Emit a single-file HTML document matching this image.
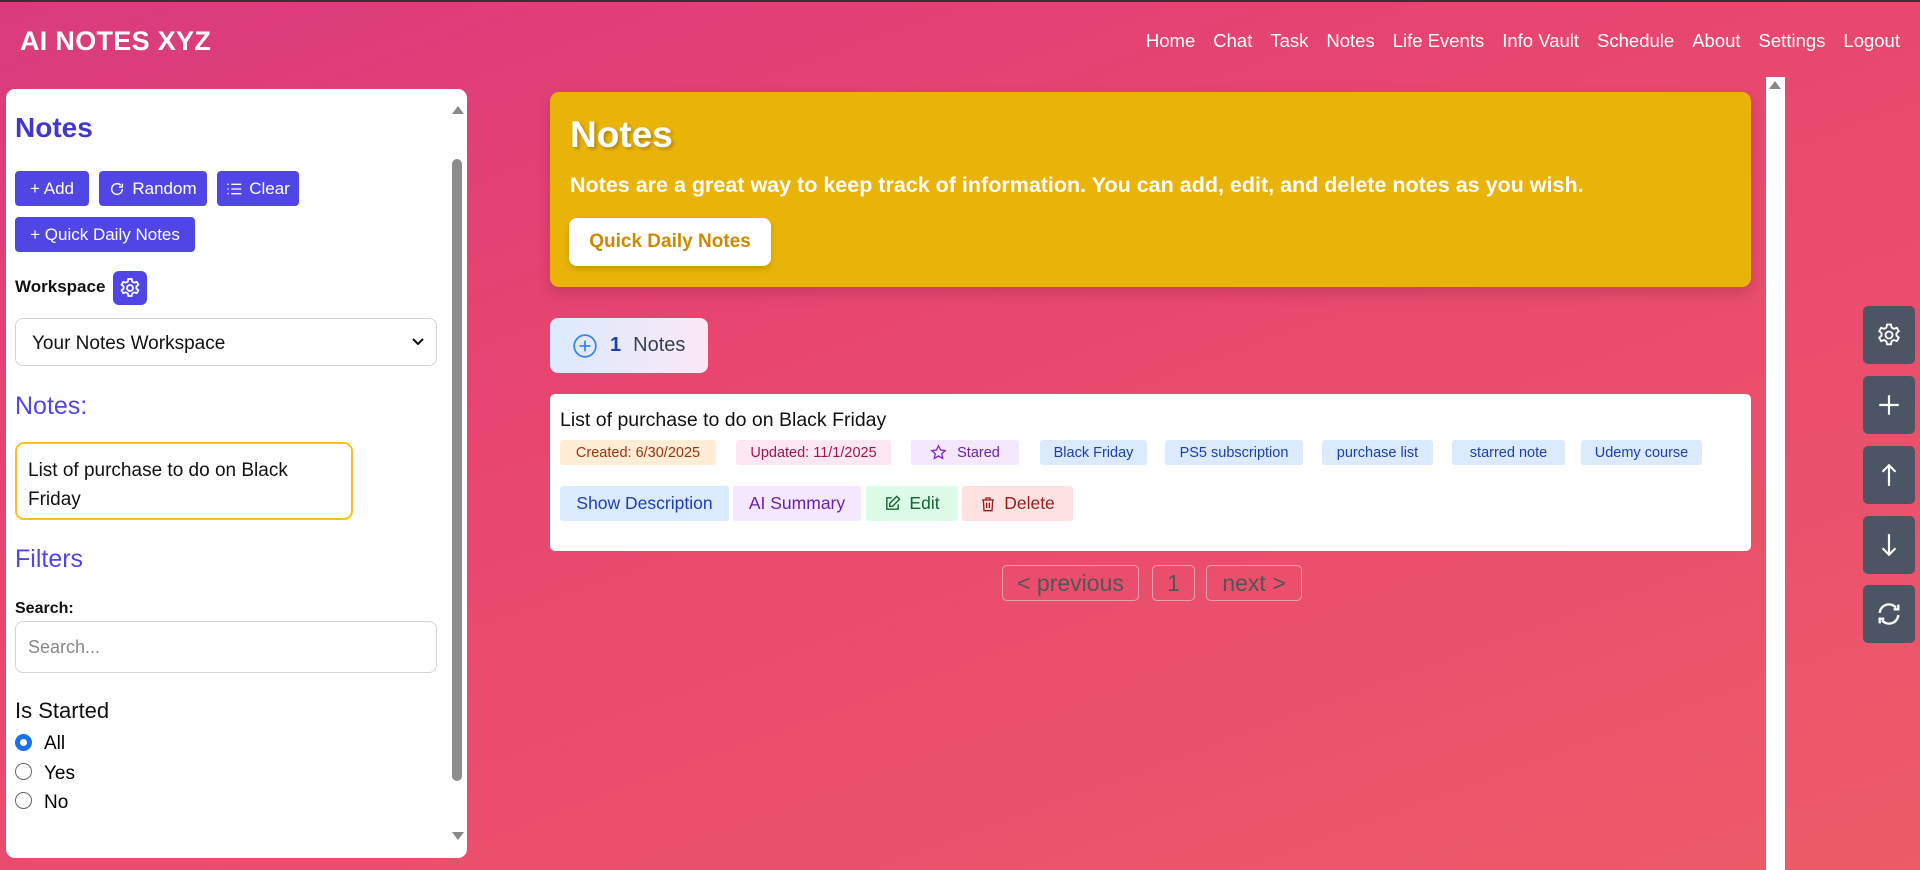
<!DOCTYPE html>
<html><head><meta charset="utf-8"><style>
*{box-sizing:border-box;margin:0;padding:0}
body{width:1920px;height:870px;overflow:hidden;font-family:"Liberation Sans",sans-serif;background:linear-gradient(160deg,#d93b7d 0%,#e8466f 40%,#ec5b68 100%);position:relative}
.a{position:absolute}
.topline{left:0;top:0;width:1920px;height:2px;background:#333}
.logo{left:20px;top:26px;color:#fff;font-weight:bold;font-size:27px;letter-spacing:.3px}
.nav{right:20px;top:30px;color:#fff;font-size:18.5px;display:flex;gap:18px}
.side{left:6px;top:89px;width:461px;height:769px;background:#fff;border-radius:9px}
.h1{color:#4338ca;font-weight:bold;font-size:28px}
.btn{background:#4f46e5;color:#fff;border-radius:4px;font-size:17px;display:flex;align-items:center;justify-content:center;gap:7px;height:35px}
.sel{left:15px;top:318px;width:422px;height:48px;border:1px solid #d1d5db;border-radius:8px;font-size:19px;padding:14px 16px;color:#111}
.h2{color:#4f46e5;font-size:25px;font-weight:500}
.radio{width:17px;height:17px;border:1.5px solid #666;border-radius:50%}
.banner{left:550px;top:92px;width:1201px;height:195px;background:#e9b308;border-radius:9px;box-shadow:0 6px 14px rgba(0,0,0,.15)}
.tag{top:440px;height:25px;border-radius:3px;font-size:14.5px;display:flex;align-items:center;justify-content:center}
.act{top:486px;height:35px;border-radius:3px;font-size:17.5px;display:flex;align-items:center;justify-content:center;gap:8px}
.pg{top:565px;height:36px;border:1px solid #e7a0ad;border-radius:5px;color:#555;font-size:23px;display:flex;align-items:center;justify-content:center}
.rb{left:1863px;width:52px;height:58px;background:#4b5563;border-radius:5px;display:flex;align-items:center;justify-content:center}
</style></head><body>
<div class="a topline"></div>
<div class="a logo">AI NOTES XYZ</div>
<div class="a nav"><span>Home</span><span>Chat</span><span>Task</span><span>Notes</span><span>Life Events</span><span>Info Vault</span><span>Schedule</span><span>About</span><span>Settings</span><span>Logout</span></div>

<div class="a side"></div>
<div class="a" style="left:452px;top:106px;width:0;height:0;border-left:6px solid transparent;border-right:6px solid transparent;border-bottom:8px solid #888"></div>
<div class="a" style="left:452px;top:159px;width:10px;height:622px;background:#8c8c8c;border-radius:5px"></div>
<div class="a" style="left:452px;top:832px;width:0;height:0;border-left:6px solid transparent;border-right:6px solid transparent;border-top:8px solid #888"></div>
<div class="a h1" style="left:15px;top:112px">Notes</div>
<div class="a btn" style="left:15px;top:171px;width:74px">+ Add</div>
<div class="a btn" style="left:99px;top:171px;width:108px"><svg width="16" height="16" viewBox="0 0 24 24" fill="none" stroke="#fff" stroke-width="2.2"><path d="M20 12a8 8 0 1 1-2.5-5.8M20 4v5h-5"/></svg>Random</div>
<div class="a btn" style="left:217px;top:171px;width:82px"><svg width="16" height="14" viewBox="0 0 24 20" stroke="#fff" stroke-width="2"><path d="M8 3h15M8 10h15M8 17h15M2 3h2M2 10h2M2 17h2"/></svg>Clear</div>
<div class="a btn" style="left:15px;top:217px;width:180px">+ Quick Daily Notes</div>
<div class="a" style="left:15px;top:277px;font-size:17px;font-weight:bold;color:#111">Workspace</div>
<div class="a btn" style="left:113px;top:271px;width:34px;height:34px;border-radius:6px"><svg width="24" height="24" viewBox="0 0 24 24" fill="none" stroke="#fff" stroke-width="1.8"><circle cx="12" cy="12" r="3"/><path d="M10.3 3h3.4l.5 2.6 2 1.1 2.5-.9 1.7 2.9-2 1.7v2.2l2 1.7-1.7 2.9-2.5-.9-2 1.1-.5 2.6h-3.4l-.5-2.6-2-1.1-2.5.9-1.7-2.9 2-1.7v-2.2l-2-1.7 1.7-2.9 2.5.9 2-1.1z"/></svg></div>
<div class="a sel">Your Notes Workspace<svg class="a" style="right:12px;top:18px" width="12" height="10" viewBox="0 0 12 8" fill="none" stroke="#111" stroke-width="2"><path d="M1 1l5 5 5-5"/></svg></div>
<div class="a h2" style="left:15px;top:392px">Notes:</div>
<div class="a" style="left:15px;top:442px;width:338px;height:78px;border:2px solid #fbbf24;border-radius:9px;padding:12px 11px;font-size:19px;font-weight:500;line-height:29px;color:#111">List of purchase to do on Black Friday</div>
<div class="a h2" style="left:15px;top:545px">Filters</div>
<div class="a" style="left:15px;top:600px;font-size:16px;font-weight:bold;color:#111">Search:</div>
<div class="a" style="left:15px;top:621px;width:422px;height:52px;border:1px solid #d1d5db;border-radius:8px;padding:15px 12px;font-size:18px;color:#888">Search...</div>
<div class="a" style="left:15px;top:698px;font-size:22px;font-weight:500;color:#111">Is Started</div>
<div class="a radio" style="left:15px;top:734px;border:5px solid #1a73e8"></div><div class="a" style="left:44px;top:733px;font-size:19px">All</div>
<div class="a radio" style="left:15px;top:763px"></div><div class="a" style="left:44px;top:763px;font-size:19px">Yes</div>
<div class="a radio" style="left:15px;top:792px"></div><div class="a" style="left:44px;top:792px;font-size:19px">No</div>

<div class="a banner"></div>
<div class="a" style="left:570px;top:114px;color:#fff;font-size:37px;font-weight:bold;text-shadow:2px 2px 3px rgba(0,0,0,.25)">Notes</div>
<div class="a" style="left:570px;top:173px;color:#fff;font-size:21.5px;font-weight:bold">Notes are a great way to keep track of information. You can add, edit, and delete notes as you wish.</div>
<div class="a" style="left:569px;top:218px;width:202px;height:48px;background:#fff;border-radius:8px;color:#ca8a04;font-size:19px;font-weight:bold;display:flex;align-items:center;justify-content:center;box-shadow:0 3px 6px rgba(0,0,0,.15)">Quick Daily Notes</div>

<div class="a" style="left:550px;top:318px;width:158px;height:55px;border-radius:8px;background:linear-gradient(90deg,#dbeafe,#fae8f5);display:flex;align-items:center;padding-left:22px;gap:12px;font-size:20px"><svg width="26" height="26" viewBox="0 0 24 24" fill="none" stroke="#3b82f6" stroke-width="1.6"><circle cx="12" cy="12" r="10"/><path d="M12 7v10M7 12h10"/></svg><b style="color:#1e40af">1</b><span style="color:#374151;font-weight:500">Notes</span></div>

<div class="a" style="left:550px;top:394px;width:1201px;height:157px;background:#fff;border-radius:5px"></div>
<div class="a" style="left:560px;top:409px;font-size:19.5px;color:#111">List of purchase to do on Black Friday</div>
<div class="a tag" style="left:560px;width:156px;background:#ffedd5;color:#9a3412">Created: 6/30/2025</div>
<div class="a tag" style="left:736px;width:155px;background:#fce7f3;color:#9d174d">Updated: 11/1/2025</div>
<div class="a tag" style="left:911px;width:108px;background:#f3e8ff;color:#6b21a8;gap:10px"><svg width="17" height="17" viewBox="0 0 24 24" fill="none" stroke="#7e22ce" stroke-width="1.8"><path d="M12 2.5l2.9 6 6.6.8-4.9 4.5 1.3 6.5L12 17l-5.9 3.3 1.3-6.5-4.9-4.5 6.6-.8z"/></svg>Stared</div>
<div class="a tag" style="left:1040px;width:107px;background:#dbeafe;color:#1e40af">Black Friday</div>
<div class="a tag" style="left:1165px;width:138px;background:#dbeafe;color:#1e40af">PS5 subscription</div>
<div class="a tag" style="left:1322px;width:111px;background:#dbeafe;color:#1e40af">purchase list</div>
<div class="a tag" style="left:1452px;width:113px;background:#dbeafe;color:#1e40af">starred note</div>
<div class="a tag" style="left:1581px;width:121px;background:#dbeafe;color:#1e40af">Udemy course</div>
<div class="a act" style="left:560px;width:169px;background:#dbeafe;color:#1e40af">Show Description</div>
<div class="a act" style="left:733px;width:128px;background:#f3e8ff;color:#6b21a8">AI Summary</div>
<div class="a act" style="left:866px;width:92px;background:#dcfce7;color:#166534"><svg width="17" height="17" viewBox="0 0 24 24" fill="none" stroke="#166534" stroke-width="2"><path d="M11 4H4v16h16v-7M18 2l4 4-10 10H8v-4z"/></svg>Edit</div>
<div class="a act" style="left:962px;width:111px;background:#fee2e2;color:#991b1b"><svg width="16" height="18" viewBox="0 0 24 24" fill="none" stroke="#991b1b" stroke-width="2"><path d="M3 6h18M9 6V3h6v3M5 6l1 16h12l1-16M10 10v8M14 10v8"/></svg>Delete</div>

<div class="a pg" style="left:1002px;width:137px">&lt; previous</div>
<div class="a pg" style="left:1152px;width:43px">1</div>
<div class="a pg" style="left:1206px;width:96px">next &gt;</div>

<div class="a" style="left:1766px;top:77px;width:19px;height:793px;background:#fff"></div>
<div class="a" style="left:1769px;top:81px;width:0;height:0;border-left:6px solid transparent;border-right:6px solid transparent;border-bottom:8px solid #888"></div>

<div class="a rb" style="top:306px"><svg width="28" height="28" viewBox="0 0 24 24" fill="none" stroke="#fff" stroke-width="1.6"><circle cx="12" cy="12" r="3"/><path d="M10.3 3h3.4l.5 2.6 2 1.1 2.5-.9 1.7 2.9-2 1.7v2.2l2 1.7-1.7 2.9-2.5-.9-2 1.1-.5 2.6h-3.4l-.5-2.6-2-1.1-2.5.9-1.7-2.9 2-1.7v-2.2l-2-1.7 1.7-2.9 2.5.9 2-1.1z"/></svg></div>
<div class="a rb" style="top:376px"><svg width="26" height="26" viewBox="0 0 24 24" stroke="#fff" stroke-width="2"><path d="M12 3v18M3 12h18"/></svg></div>
<div class="a rb" style="top:446px"><svg width="26" height="30" viewBox="0 0 24 24" fill="none" stroke="#fff" stroke-width="2"><path d="M12 22V3M6 9l6-6 6 6"/></svg></div>
<div class="a rb" style="top:516px"><svg width="26" height="30" viewBox="0 0 24 24" fill="none" stroke="#fff" stroke-width="2"><path d="M12 2v19M6 15l6 6 6-6"/></svg></div>
<div class="a rb" style="top:585px"><svg width="28" height="28" viewBox="0 0 24 24" fill="none" stroke="#fff" stroke-width="2"><path d="M4 11a8 8 0 0 1 14-4.5M20 4v4h-4M20 13a8 8 0 0 1-14 4.5M4 20v-4h4"/></svg></div>
</body></html>
